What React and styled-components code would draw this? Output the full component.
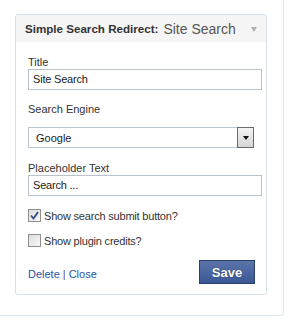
import React from 'react';
import styled, { createGlobalStyle } from 'styled-components';

const GlobalStyle = createGlobalStyle`
    body {
        margin: 0;
        background: #fff;
        font-family: "Liberation Sans", Arial, sans-serif;
        font-size: 11px;
        color: #333;
    }
`;

const Sidebar = styled.div`
    width: 284px;
    height: 316px;
    box-sizing: border-box;
    padding: 14px 0 0 15px;
    border-right: 1px solid #dbe5ee;
    border-bottom: 1px solid #dbe5ee;
    border-bottom-right-radius: 4px;
`;

const Widget = styled.div`
    width: 252px;
    box-sizing: border-box;
    border: 1px solid #d3e2ed;
    border-radius: 3px;
    background: #fff;
`;

const WidgetHeader = styled.div`
    height: 27px;
    display: flex;
    align-items: center;
    padding: 0 9px;
    background: #f5f5f5;
    border-radius: 3px 3px 0 0;
`;

const WidgetName = styled.span`
    font-weight: bold;
    font-size: 11.6px;
    color: #333;
`;

const InstanceTitle = styled.span`
    margin-left: 5px;
    font-size: 14px;
    color: #555;
`;

const Toggle = styled.span`
    margin-left: auto;
    width: 0;
    height: 0;
    border-left: 3.5px solid transparent;
    border-right: 3.5px solid transparent;
    border-top: 5px solid #b0b0b0;
    margin-top: 2px;
`;

const WidgetBody = styled.div`
    padding: 14px 4px 10px 12px;
`;

const Label = styled.label`
    display: block;
    line-height: 13px;
    margin-top: ${({ $gap }) => $gap || 0}px;
`;

const TextInput = styled.div`
    height: 21px;
    box-sizing: border-box;
    border: 1px solid #bac2cc;
    padding: 0 4px;
    line-height: 19px;
    font-size: 11px;
    letter-spacing: -0.2px;
    color: #222;
`;

const Select = styled.div`
    margin-top: 11px;
    width: 226px;
    height: 21px;
    box-sizing: border-box;
    border: 1px solid #b9c5d2;
    display: flex;
    align-items: center;
    padding-left: 7px;
    font-size: 11px;
    color: #222;
`;

const SelectButton = styled.span`
    margin-left: auto;
    width: 17px;
    height: 21px;
    box-sizing: border-box;
    margin-right: -1px;
    border: 1px solid #6b6b6b;
    background: linear-gradient(#f4f4f4, #d6d6d6);
    display: flex;
    align-items: center;
    justify-content: center;

    &::after {
        content: '';
        border-left: 3.5px solid transparent;
        border-right: 3.5px solid transparent;
        border-top: 4px solid #111;
    }
`;

const CheckRow = styled.div`
    display: flex;
    align-items: center;
    height: 13px;
    letter-spacing: -0.2px;
    margin-top: ${({ $gap }) => $gap}px;
`;

const Box = styled.span`
    width: 13px;
    height: 13px;
    box-sizing: border-box;
    border: 1px solid #8e8f8f;
    background: linear-gradient(135deg, #dcdcdc, #f8f8f8);
    margin-right: 3px;
    display: flex;
    align-items: center;
    justify-content: center;
`;

const Footer = styled.div`
    margin-top: 13px;
    display: flex;
    align-items: center;
    justify-content: space-between;
    padding-right: 7px;
`;

const Links = styled.div`
    color: #2455a4;
    font-size: 11px;
    padding-top: 3px;
    span {
        color: #555;
        margin: 0 3px;
    }
`;

const SaveButton = styled.button`
    width: 56px;
    height: 24px;
    border: 1px solid #2b3f6e;
    background: linear-gradient(#5b74aa, #3b5895);
    color: #fff;
    font-family: "Liberation Sans", Arial, sans-serif;
    font-weight: bold;
    font-size: 13px;
    text-shadow: 0 0 1px #1d2c50;
    padding: 0;
`;

const Check = () => (
    <svg width="9" height="9" viewBox="0 0 9 9">
        <path d="M1 4.5 L3.5 7.5 L8 1" fill="none" stroke="#364b8a" strokeWidth="1.8" />
    </svg>
);

const App = () => (
    <>
        <GlobalStyle />
        <Sidebar>
            <Widget>
                <WidgetHeader>
                    <WidgetName>Simple Search Redirect:</WidgetName>
                    <InstanceTitle>Site Search</InstanceTitle>
                    <Toggle />
                </WidgetHeader>
                <WidgetBody>
                    <Label>Title</Label>
                    <TextInput>Site Search</TextInput>
                    <Label $gap={13}>Search Engine</Label>
                    <Select>
                        Google
                        <SelectButton />
                    </Select>
                    <Label $gap={14}>Placeholder Text</Label>
                    <TextInput>Search ...</TextInput>
                    <CheckRow $gap={13}>
                        <Box>
                            <Check />
                        </Box>
                        Show search submit button?
                    </CheckRow>
                    <CheckRow $gap={12}>
                        <Box />
                        Show plugin credits?
                    </CheckRow>
                    <Footer>
                        <Links>
                            Delete<span>|</span>Close
                        </Links>
                        <SaveButton>Save</SaveButton>
                    </Footer>
                </WidgetBody>
            </Widget>
        </Sidebar>
    </>
);

export default App;
